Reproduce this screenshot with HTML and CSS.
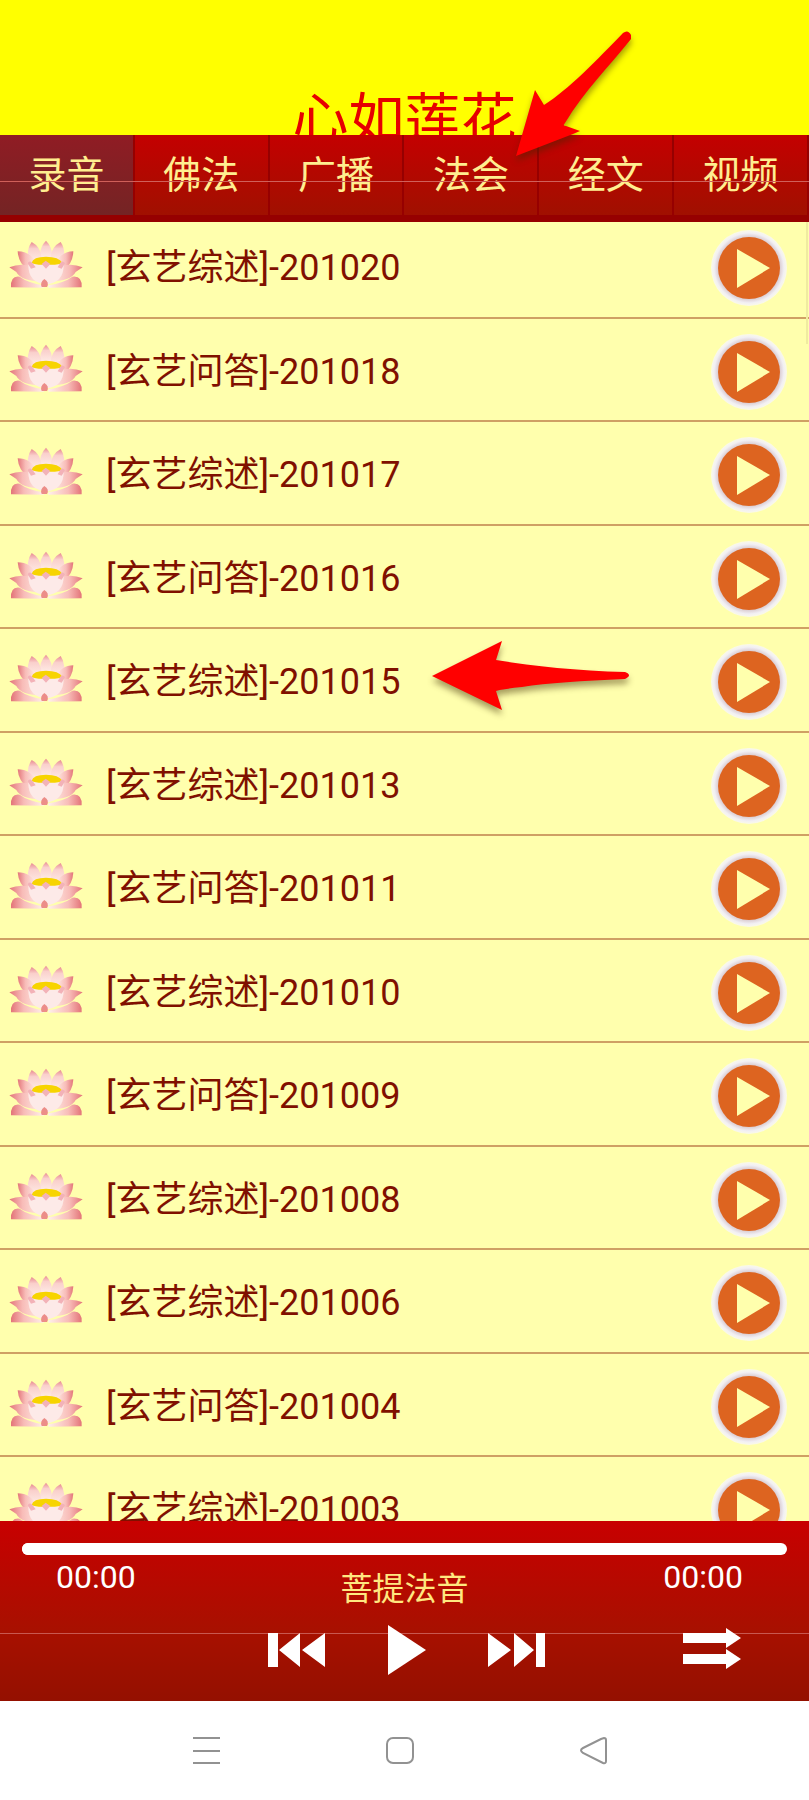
FILE: index.html
```
<!DOCTYPE html>
<html lang="zh-CN">
<head>
    <title>心如莲花</title>
    <meta charset="utf-8"/>
    <meta name="viewport" content="width=device-width, initial-scale=1">
    <link rel="stylesheet" href="styles.css">
</head>
<body>
    <svg class="defs" aria-hidden="true">
        <defs>
            <linearGradient id="petal" x1="0" y1="0" x2="0" y2="1">
                <stop offset="0" stop-color="#e88a90"/>
                <stop offset="0.3" stop-color="#fad0cc"/>
                <stop offset="1" stop-color="#fff0ea"/>
            </linearGradient>
            <linearGradient id="petalLeft" x1="0" y1="0" x2="1" y2="0">
                <stop offset="0" stop-color="#e37478"/>
                <stop offset="0.4" stop-color="#f8bcb8"/>
                <stop offset="1" stop-color="#fff0ea"/>
            </linearGradient>
            <linearGradient id="petalRight" x1="1" y1="0" x2="0" y2="0">
                <stop offset="0" stop-color="#e37478"/>
                <stop offset="0.4" stop-color="#f8bcb8"/>
                <stop offset="1" stop-color="#fff0ea"/>
            </linearGradient>
            <radialGradient id="ring">
                <stop offset="0.82" stop-color="#dccfd4"/>
                <stop offset="0.92" stop-color="#f2f0f4"/>
                <stop offset="1" stop-color="#fbfae6"/>
            </radialGradient>
        </defs>
        <symbol id="lotus" viewBox="0 0 222 144">
            <path d="M111 2Q90 22 92 60H130Q132 22 111 2Z" fill="url(#petal)"/>
            <path d="M68 6Q50 30 60 72L98 62Q98 22 68 6Z" fill="url(#petal)"/>
            <path d="M155 6Q172 30 162 72L124 62Q124 22 155 6Z" fill="url(#petal)"/>
            <path d="M26 34Q28 70 60 94L84 72Q66 34 26 34Z" fill="url(#petalLeft)"/>
            <path d="M193 34Q192 70 162 94L138 72Q156 34 193 34Z" fill="url(#petalRight)"/>
            <path d="M1 82Q28 70 58 76L100 124Q36 124 22 96Z" fill="url(#petalLeft)"/>
            <path d="M221 82Q194 70 164 76L122 124Q186 124 200 96Z" fill="url(#petalRight)"/>
            <path d="M6 142Q4 106 32 110Q56 128 104 136V143Z" fill="url(#petalLeft)"/>
            <path d="M218 142Q220 106 190 110Q166 128 118 136V143Z" fill="url(#petalRight)"/>
            <path d="M58 76Q60 62 111 64Q162 62 164 76Q164 128 111 134Q58 128 58 76Z" fill="#fdeae8"/>
            <path d="M68 68Q72 50 111 50Q150 50 160 68Q150 76 111 74Q80 76 68 68Z" fill="#f7d400"/>
            <path d="M56 70Q60 60 70 68L80 82L66 86ZM168 70Q162 60 154 68L146 82L158 86ZM110 62L124 72L111 86L98 72Z" fill="#f3b2b8"/>
            <path d="M106 117Q122 126 114 141H98Q92 128 106 117Z" fill="#ec8d88"/>
        </symbol>
        <symbol id="play" viewBox="0 0 76 78">
            <circle cx="38" cy="39" r="38" fill="url(#ring)"/>
            <circle cx="38" cy="39" r="31" fill="#dd6420"/>
            <path d="M26 20L59 39L26 59Z" fill="#ffffad"/>
        </symbol>
    </svg>

    <div class="app">
        <header class="header">
            <h1>心如莲花</h1>
        </header>

        <nav class="tabs">
            <a href="#" class="tab active">录音</a>
            <a href="#" class="tab">佛法</a>
            <a href="#" class="tab">广播</a>
            <a href="#" class="tab">法会</a>
            <a href="#" class="tab">经文</a>
            <a href="#" class="tab">视频</a>
        </nav>

        <main class="list-wrap">
            <ul class="list">
                <li><svg class="lotus"><use href="#lotus"/></svg><span>[玄艺综述]-201020</span><button class="play" aria-label="播放"><svg><use href="#play"/></svg></button></li>
                <li><svg class="lotus"><use href="#lotus"/></svg><span>[玄艺问答]-201018</span><button class="play" aria-label="播放"><svg><use href="#play"/></svg></button></li>
                <li><svg class="lotus"><use href="#lotus"/></svg><span>[玄艺综述]-201017</span><button class="play" aria-label="播放"><svg><use href="#play"/></svg></button></li>
                <li><svg class="lotus"><use href="#lotus"/></svg><span>[玄艺问答]-201016</span><button class="play" aria-label="播放"><svg><use href="#play"/></svg></button></li>
                <li><svg class="lotus"><use href="#lotus"/></svg><span>[玄艺综述]-201015</span><button class="play" aria-label="播放"><svg><use href="#play"/></svg></button></li>
                <li><svg class="lotus"><use href="#lotus"/></svg><span>[玄艺综述]-201013</span><button class="play" aria-label="播放"><svg><use href="#play"/></svg></button></li>
                <li><svg class="lotus"><use href="#lotus"/></svg><span>[玄艺问答]-201011</span><button class="play" aria-label="播放"><svg><use href="#play"/></svg></button></li>
                <li><svg class="lotus"><use href="#lotus"/></svg><span>[玄艺综述]-201010</span><button class="play" aria-label="播放"><svg><use href="#play"/></svg></button></li>
                <li><svg class="lotus"><use href="#lotus"/></svg><span>[玄艺问答]-201009</span><button class="play" aria-label="播放"><svg><use href="#play"/></svg></button></li>
                <li><svg class="lotus"><use href="#lotus"/></svg><span>[玄艺综述]-201008</span><button class="play" aria-label="播放"><svg><use href="#play"/></svg></button></li>
                <li><svg class="lotus"><use href="#lotus"/></svg><span>[玄艺综述]-201006</span><button class="play" aria-label="播放"><svg><use href="#play"/></svg></button></li>
                <li><svg class="lotus"><use href="#lotus"/></svg><span>[玄艺问答]-201004</span><button class="play" aria-label="播放"><svg><use href="#play"/></svg></button></li>
                <li><svg class="lotus"><use href="#lotus"/></svg><span>[玄艺综述]-201003</span><button class="play" aria-label="播放"><svg><use href="#play"/></svg></button></li>
            </ul>
            <div class="scrollbar"></div>
        </main>

        <footer class="player">
            <input type="range" class="progress" min="0" max="100" value="0" aria-label="进度">
            <div class="info">
                <span class="time">00:00</span>
                <span class="track">菩提法音</span>
                <span class="time">00:00</span>
            </div>
            <div class="controls">
                <div class="buttons">
                    <button aria-label="上一首"><svg width="58" height="50" viewBox="0 0 58 50"><path d="M0 8H10V42H0ZM32 8V42L11 25ZM57 8V42L34 25Z"/></svg></button>
                    <button aria-label="播放"><svg width="38" height="50" viewBox="0 0 38 50"><path d="M0 0L38 25L0 50Z"/></svg></button>
                    <button aria-label="下一首"><svg width="58" height="50" viewBox="0 0 58 50"><path d="M0 8L23 25L0 42ZM26 8L46 25L26 42ZM48 8H57V42H48Z"/></svg></button>
                </div>
                <button class="order" aria-label="顺序播放"><svg width="58" height="50" viewBox="0 0 58 50"><path d="M0 8H43V3L58 13L43 23V18H0ZM0 29H43V24L58 34L43 44V39H0Z"/></svg></button>
            </div>
        </footer>

        <div class="system">
            <button aria-label="菜单"><svg width="28" height="28" viewBox="0 0 28 28"><path d="M0 1H27M0 14H27M0 26H27"/></svg></button>
            <button aria-label="主页"><svg width="28" height="28" viewBox="0 0 28 28"><rect x="1" y="1" width="26" height="25" rx="6"/></svg></button>
            <button aria-label="返回"><svg width="28" height="28" viewBox="0 0 28 28"><path d="M25 1Q27 1 27 3V24Q27 27 24 26L4 16Q0 13 4 11L22 2Z"/></svg></button>
        </div>

        <svg class="arrow arrow-tab" width="116" height="126" viewBox="0 0 116 126"><path d="M0 125L19 59L28 74C52 59 82 28 107 2Q112 -2 115 4V8C92 37 69 59 49 92Q46 95 50 95L64 100L57 103Z"/></svg>
        <svg class="arrow arrow-row" width="198" height="70" viewBox="0 0 198 70"><path d="M0 35L70 0L64 19C100 25 145 30 193 31Q201 34 193 38C150 40 115 42 90 46Q70 48 64 50L70 69Z"/></svg>
    </div>
</body>
</html>
```

FILE: styles.css
```
* {
    box-sizing: border-box;
}

body {
    margin: 0;
    background-color: #ffffff;
    font-family: Roboto, "Noto Sans CJK SC", sans-serif;
}

button {
    display: block;
    padding: 0;
    border: none;
    background: none;
    cursor: pointer;
}

svg {
    display: block;
}

.defs {
    position: absolute;
    width: 0;
    height: 0;
}

.app {
    position: relative;
    display: flex;
    flex-direction: column;
    height: 100vh;
    overflow: hidden;
}

.header {
    height: 135px;
    padding-top: 88px;
    background-color: #ffff00;
    overflow: hidden;
    flex-shrink: 0;
}

.header h1 {
    margin: 0;
    font-size: 56px;
    font-weight: normal;
    line-height: 64px;
    text-align: center;
    color: #e60000;
}

.tabs {
    position: relative;
    z-index: 1;
    display: grid;
    grid-template-columns: repeat(6, 1fr);
    height: 80px;
    flex-shrink: 0;
    background: linear-gradient(#c40000, #a01000);
    box-shadow: 0 7px 0 #960000;
}

.tabs::after {
    content: "";
    position: absolute;
    top: 46px;
    left: 0;
    right: 0;
    height: 1px;
    background-color: #d0605a;
}

.tab {
    border-right: 2px solid #960000;
    font-size: 38px;
    line-height: 80px;
    text-align: center;
    text-decoration: none;
    color: #ffee90;
}

.tab.active {
    background: linear-gradient(#901c24, #742424);
}

.list-wrap {
    position: relative;
    flex: 1;
    min-height: 0;
    overflow: hidden;
    background-color: #ffffad;
}

.list {
    margin: 0;
    padding: 0;
    list-style: none;
}

.list li {
    display: flex;
    align-items: center;
    height: 104px;
    padding: 4px 22px 0 9px;
    border-bottom: 2px solid #cfa064;
    font-size: 36px;
    color: #801000;
}

.list li:nth-child(even) {
    height: 103px;
}

.list span {
    flex: 1;
    line-height: 48px;
}

.lotus {
    width: 74px;
    height: 48px;
    margin: 0 23px 8px 0;
}

.play svg {
    width: 76px;
    height: 78px;
}

.scrollbar {
    position: absolute;
    top: 0;
    right: 1px;
    width: 2px;
    height: 129px;
    background-color: #f0eca0;
}

.player {
    height: 180px;
    padding: 22px 22px 0;
    flex-shrink: 0;
    background: linear-gradient(transparent 112px, #c85850 112px, #c85850 113px, transparent 113px), linear-gradient(#c80000, #a81000 60%, #941000);
}

.progress {
    appearance: none;
    -webkit-appearance: none;
    display: block;
    width: 100%;
    height: 12px;
    margin: 0;
    border-radius: 6px;
    background-color: #ffffff;
}

.progress::-webkit-slider-thumb {
    -webkit-appearance: none;
    width: 12px;
    height: 12px;
    border-radius: 6px;
    background-color: #ffffff;
}

.info {
    display: grid;
    grid-template-columns: 1fr auto 1fr;
    padding: 0 34px;
    height: 70px;
    color: #ffffff;
    font-size: 32px;
    line-height: 44px;
}

.time:last-child {
    text-align: right;
    padding-right: 10px;
}

.track {
    padding-top: 12px;
    color: #ffe880;
}

.controls {
    display: grid;
    grid-template-columns: 1fr auto 1fr;
    align-items: center;
}

.controls svg {
    fill: #ffffff;
}

.buttons {
    grid-column: 2;
    display: flex;
    gap: 62px;
    padding-left: 4px;
}

.order {
    justify-self: end;
    margin-right: 46px;
}

.system {
    display: flex;
    justify-content: center;
    align-items: center;
    gap: 165px;
    height: 99px;
    padding-right: 9px;
    flex-shrink: 0;
}

.system svg {
    fill: none;
    stroke: #929292;
    stroke-width: 2;
}

/* pointers drawn over the page */
.arrow {
    position: absolute;
    z-index: 2;
    fill: #ff0000;
    overflow: visible;
    pointer-events: none;
    filter: drop-shadow(0 5px 3px rgba(60, 40, 0, 0.45));
}

.arrow-tab {
    left: 516px;
    top: 31px;
}

.arrow-row {
    left: 432px;
    top: 641px;
}
```
